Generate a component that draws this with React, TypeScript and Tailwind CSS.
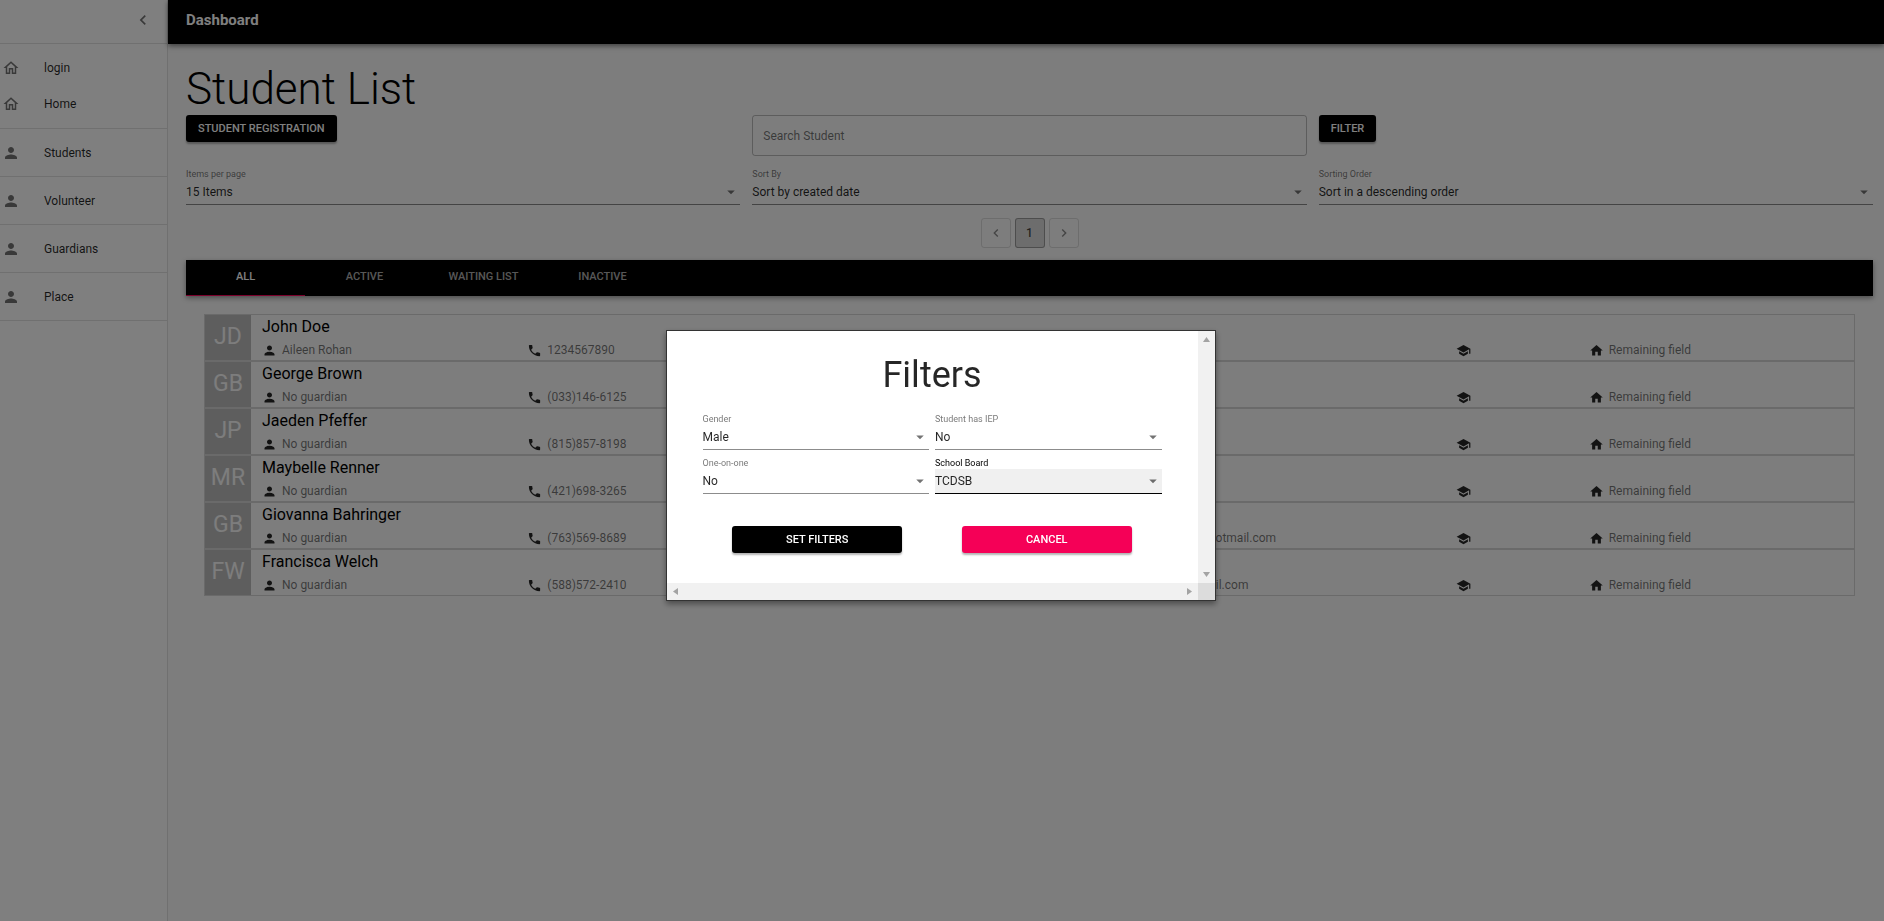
import type { ReactNode } from "react";
import { MdOutlineHome, MdPerson, MdPhone, MdChevronLeft, MdChevronRight, MdArrowDropDown, MdHome, MdSchool, MdEmail } from "react-icons/md";

const students = [
  { initials: "JD", name: "John Doe", guardian: "Aileen Rohan", phone: "1234567890", email: "" },
  { initials: "GB", name: "George Brown", guardian: "No guardian", phone: "(033)146-6125", email: "" },
  { initials: "JP", name: "Jaeden Pfeffer", guardian: "No guardian", phone: "(815)857-8198", email: "" },
  { initials: "MR", name: "Maybelle Renner", guardian: "No guardian", phone: "(421)698-3265", email: "" },
  { initials: "GB", name: "Giovanna Bahringer", guardian: "No guardian", phone: "(763)569-8689", email: "Giovanna_Bahringer47@hotmail.com" },
  { initials: "FW", name: "Francisca Welch", guardian: "No guardian", phone: "(588)572-2410", email: "Francisca_Welch99@gmail.com" },
];

const raised = "rounded-[3px] text-[11px] leading-[19px] font-medium uppercase shadow-[0_2px_2px_rgba(0,0,0,0.3)]";

function NavItem({ icon, label }: { icon: ReactNode; label: string }) {
  return (
    <a href="#" className="flex h-full items-center gap-6 pl-[2px] text-[12px] text-black/85">
      <span className="text-[18px] text-black/55">{icon}</span>
      {label}
    </a>
  );
}

function SelectField({ id, label, value, focused = false }: { id: string; label: string; value: string; focused?: boolean }) {
  return (
    <div className="flex min-w-0 flex-col">
      <label htmlFor={id} className={`text-[9px] leading-3 ${focused ? "text-black" : "text-black/55"}`}>
        {label}
      </label>
      <div className={`grid items-center border-b ${focused ? "border-black bg-[#f0f0f0]" : "border-black/45"}`}>
        <select id={id} defaultValue={value} className="col-start-1 row-start-1 h-6 w-full appearance-none bg-transparent text-[12px] text-black/85 outline-none">
          <option>{value}</option>
        </select>
        <MdArrowDropDown className="pointer-events-none col-start-1 row-start-1 size-[18px] justify-self-end text-black/55" />
      </div>
    </div>
  );
}

function Detail({ icon, text }: { icon: ReactNode; text?: string }) {
  return (
    <div className="flex min-w-0 items-center gap-[5px] text-[12px] leading-4 whitespace-nowrap text-black/55">
      <span className="text-[15px] text-black/85">{icon}</span>
      {text}
    </div>
  );
}

function FilterDialog() {
  return (
    <div className="fixed inset-0 flex items-center justify-center bg-black/50">
      <div
        role="dialog"
        aria-modal="true"
        aria-labelledby="filters-title"
        className="mt-[10px] mr-[3px] grid w-[550px] grid-cols-[1fr_17px] grid-rows-[1fr_17px] border border-black/80 bg-white shadow-[0_3px_6px_rgba(0,0,0,0.4)]"
      >
        <div className="px-9 pt-6 pb-[30px]">
          <h2 id="filters-title" className="text-center text-[36px] leading-10 font-normal text-black/85">Filters</h2>
          <div className="mt-[18px] grid grid-cols-2 gap-x-[6px] gap-y-[7px]">
            <SelectField id="gender" label="Gender" value="Male" />
            <SelectField id="iep" label="Student has IEP" value="No" />
            <SelectField id="one" label="One-on-one" value="No" />
            <SelectField id="board" label="School Board" value="TCDSB" focused />
          </div>
          <div className="mt-8 grid grid-cols-2 justify-items-center">
            <button className={`${raised} h-[27px] w-[74%] bg-black text-white`}>Set filters</button>
            <button className={`${raised} h-[27px] w-[74%] bg-[#f50057] text-white`}>Cancel</button>
          </div>
        </div>
        <div className="flex flex-col items-center justify-between bg-[#f1f1f1] py-[6px]">
          <svg width="7" height="5" fill="#a3a3a3"><path d="M0 5h7L3.5 0z" /></svg>
          <svg width="7" height="5" fill="#a3a3a3"><path d="M0 0h7L3.5 5z" /></svg>
        </div>
        <div className="flex items-center justify-between bg-[#f1f1f1] px-[6px]">
          <svg width="5" height="7" fill="#a3a3a3"><path d="M5 0v7L0 3.5z" /></svg>
          <svg width="5" height="7" fill="#a3a3a3"><path d="M0 0v7l5-3.5z" /></svg>
        </div>
        <div className="bg-[#dcdcdc]" />
      </div>
    </div>
  );
}

export default function App() {
  return (
    <div className="flex min-h-screen bg-[#fafafa] font-[Roboto,sans-serif] text-black/85">
      <aside className="w-[168px] shrink-0 border-r border-black/12 bg-white">
        <div className="flex h-11 items-center justify-end border-b border-black/12 pr-[14px] pb-1">
          <button aria-label="Collapse menu" className="text-[20px] text-black/55"><MdChevronLeft /></button>
        </div>
        <nav>
          <div className="grid h-[85px] grid-rows-2 border-b border-black/12 py-[6px]">
            <NavItem icon={<MdOutlineHome />} label="login" />
            <NavItem icon={<MdOutlineHome />} label="Home" />
          </div>
          {["Students", "Volunteer", "Guardians", "Place"].map((l) => (
            <div key={l} className="h-12 border-b border-black/12">
              <NavItem icon={<MdPerson />} label={l} />
            </div>
          ))}
        </nav>
      </aside>
      <div className="min-w-0 flex-1">
        <header className="flex h-11 items-center bg-black px-[18px] pb-1 shadow-[0_2px_5px_rgba(0,0,0,0.5)]">
          <h1 className="text-[15px] font-bold text-white">Dashboard</h1>
        </header>
        <main className="pt-5 pr-[11px] pl-[18px]">
          <h2 className="text-[44px] leading-[51px] font-light text-black">Student List</h2>
          <div className="grid grid-cols-3 items-start gap-x-3 gap-y-3">
            <button className={`${raised} h-[27px] justify-self-start bg-black px-3 text-white`}>Student registration</button>
            <input aria-label="Search Student" placeholder="Search Student" className="h-[41px] w-full rounded-[3px] border border-black/25 bg-transparent px-[10px] text-[12px] placeholder:text-black/55" />
            <button className={`${raised} h-[27px] justify-self-start bg-black px-3 text-white`}>Filter</button>
            <SelectField id="per-page" label="Items per page" value="15 Items" />
            <SelectField id="sort-by" label="Sort By" value="Sort by created date" />
            <SelectField id="order" label="Sorting Order" value="Sort in a descending order" />
          </div>
          <nav aria-label="Pages" className="mt-[13px] flex justify-center gap-1 text-[12px]">
            <button aria-label="Previous page" className="flex size-[30px] items-center justify-center rounded-[3px] border border-black/12 text-[16px] text-black/45"><MdChevronLeft /></button>
            <button className="size-[30px] rounded-[3px] border border-black/30 bg-black/12 font-medium text-black/70">1</button>
            <button aria-label="Next page" className="flex size-[30px] items-center justify-center rounded-[3px] border border-black/12 text-[16px] text-black/45"><MdChevronRight /></button>
          </nav>
          <div role="tablist" className="mt-3 flex h-9 bg-black text-[11px] font-medium text-white/70 shadow-[0_2px_5px_rgba(0,0,0,0.4)]">
            <button role="tab" aria-selected="true" className="w-[119px] border-b border-[#f50057] text-white uppercase">All</button>
            <button role="tab" aria-selected="false" className="w-[119px] border-b border-transparent uppercase">Active</button>
            <button role="tab" aria-selected="false" className="w-[119px] border-b border-transparent uppercase">Waiting list</button>
            <button role="tab" aria-selected="false" className="w-[119px] border-b border-transparent uppercase">Inactive</button>
          </div>
          <ul className="mx-[18px] mt-[18px]">
            {students.map((s) => (
              <li key={s.phone} className="flex h-[47px] border border-black/15">
                <div className="flex w-[46px] shrink-0 items-center justify-center bg-[#bdbdbd] text-[23px] text-[#fafafa]">{s.initials}</div>
                <div className="min-w-0 flex-1 pl-[11px]">
                  <div className="text-[16px] leading-6 text-black">{s.name}</div>
                  <div className="mt-[3px] grid grid-cols-[2fr_4fr_3fr_1fr_2fr] items-center">
                    <Detail icon={<MdPerson />} text={s.guardian} />
                    <Detail icon={<MdPhone />} text={s.phone} />
                    <Detail icon={<MdEmail />} text={s.email} />
                    <Detail icon={<MdSchool />} />
                    <Detail icon={<MdHome />} text="Remaining field" />
                  </div>
                </div>
              </li>
            ))}
          </ul>
        </main>
      </div>
      <FilterDialog />
    </div>
  );
}
